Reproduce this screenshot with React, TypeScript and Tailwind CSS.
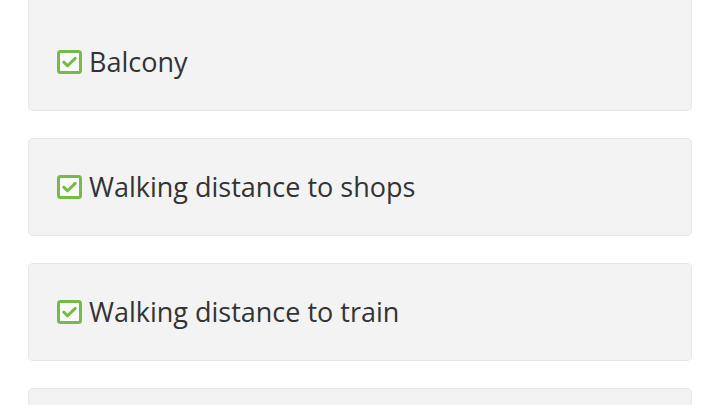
const items = [
  { label: "Balcony", first: true },
  { label: "Walking distance to shops" },
  { label: "Walking distance to train" },
  { label: "" },
];

function CheckBox() {
  return (
    <svg width="25" height="24" viewBox="0 0 25 24" className="shrink-0">
      <rect x="1.5" y="1.5" width="22" height="21" rx="2" fill="#fafafa" stroke="#76bb45" strokeWidth="3" />
      <path d="M6.8 12.2l3.8 3.6 7.6-7.4" fill="none" stroke="#76bb45" strokeWidth="3" strokeLinecap="round" strokeLinejoin="round" />
    </svg>
  );
}

export default function App() {
  return (
    <div className="h-[405px] w-[720px] overflow-hidden bg-white font-['Open_Sans','Lato',sans-serif]">
      <div className="-mt-[17px] flex flex-col gap-[27px] px-[28px]">
        {items.map((it, i) => (
          <div
            key={i}
            className={`flex h-[98px] items-center gap-[7px] rounded-[5px] border border-[#e6e6e6] bg-[#f3f3f3] pl-[28px] ${
              it.first ? "h-[128px] pt-[30px]" : ""
            }`}
          >
            {it.label && (
              <>
                <CheckBox />
                <span className="text-[27px] leading-[24px] text-[#333333]">{it.label}</span>
              </>
            )}
          </div>
        ))}
      </div>
    </div>
  );
}
